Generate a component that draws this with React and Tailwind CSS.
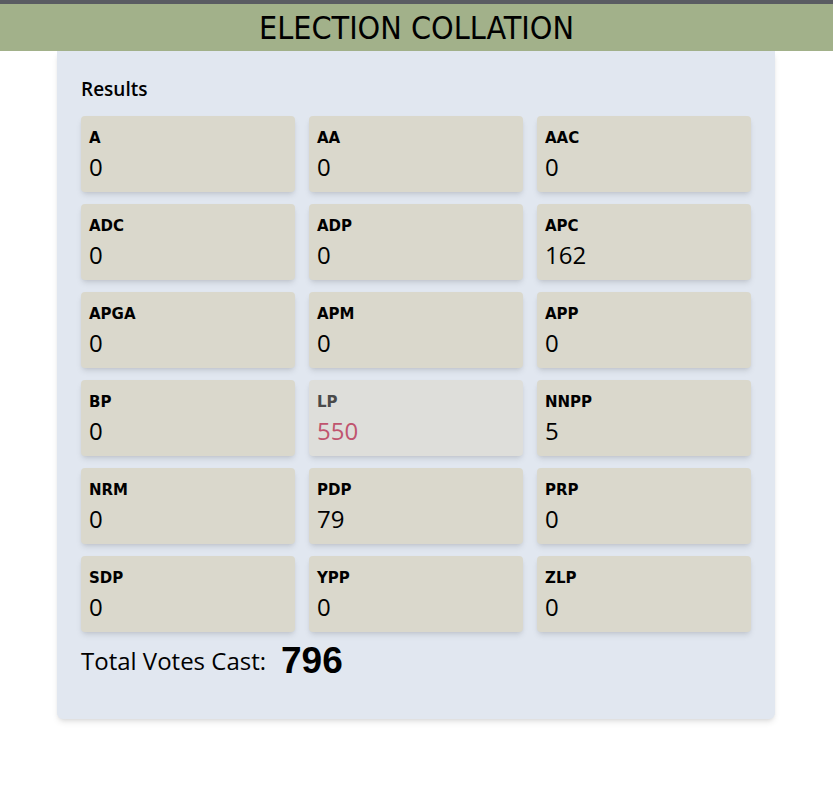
import React from 'react';

const parties = [
  ['A', 0], ['AA', 0], ['AAC', 0],
  ['ADC', 0], ['ADP', 0], ['APC', 162],
  ['APGA', 0], ['APM', 0], ['APP', 0],
  ['BP', 0], ['LP', 550], ['NNPP', 5],
  ['NRM', 0], ['PDP', 79], ['PRP', 0],
  ['SDP', 0], ['YPP', 0], ['ZLP', 0],
];

const App = () => {
  const total = parties.reduce((s, p) => s + p[1], 0);

  return (
    <div className="min-h-screen bg-white" style={{ fontFamily: '"Open Sans", sans-serif' }}>
      <div className="h-1 bg-[#5a5c62]"></div>
      <header className="h-[47px] bg-[#a2b18a] flex items-center justify-center">
        <h1 className="text-[32px] leading-none text-black" style={{ fontFamily: '"DejaVu Sans", sans-serif', fontStretch: 'condensed' }}>
          ELECTION COLLATION
        </h1>
      </header>

      <div className="mx-[57px] w-[718px] bg-[#e1e7f0] rounded-b-md shadow-md px-6 pt-[26px] pb-10">
        <h2 className="text-[19px] leading-6 font-semibold text-black mb-[15px]">Results</h2>

        {/* Party grid */}
        <div className="grid grid-cols-3 gap-x-[14px] gap-y-3">
          {parties.map(([name, votes]) => {
            const isLp = name === 'LP';
            return (
              <div
                key={name}
                className={`h-[76px] rounded-sm shadow-md px-2 pt-[13px] ${isLp ? 'bg-[#dededa]' : 'bg-[#dad8cc]'}`}
              >
                <div className={`text-[15px] font-bold leading-[18px] ${isLp ? 'text-[#4a4a4a]' : 'text-black'}`} style={{ fontFamily: '"DejaVu Sans", sans-serif' }}>{name}</div>
                <div className={`text-[24px] leading-[28px] mt-[6px] ${isLp ? 'text-[#c0546e]' : 'text-black'}`}>{votes}</div>
              </div>
            );
          })}
        </div>

        <div className="flex items-center mt-[10px] h-[37px]">
          <span className="text-[24px] leading-none text-black">Total Votes Cast:</span>
          <span className="ml-[15px] text-[37px] leading-none font-bold text-black" style={{ fontFamily: '"Liberation Sans", Arial, sans-serif' }}>{total}</span>
        </div>
      </div>
    </div>
  );
};

export default App;
